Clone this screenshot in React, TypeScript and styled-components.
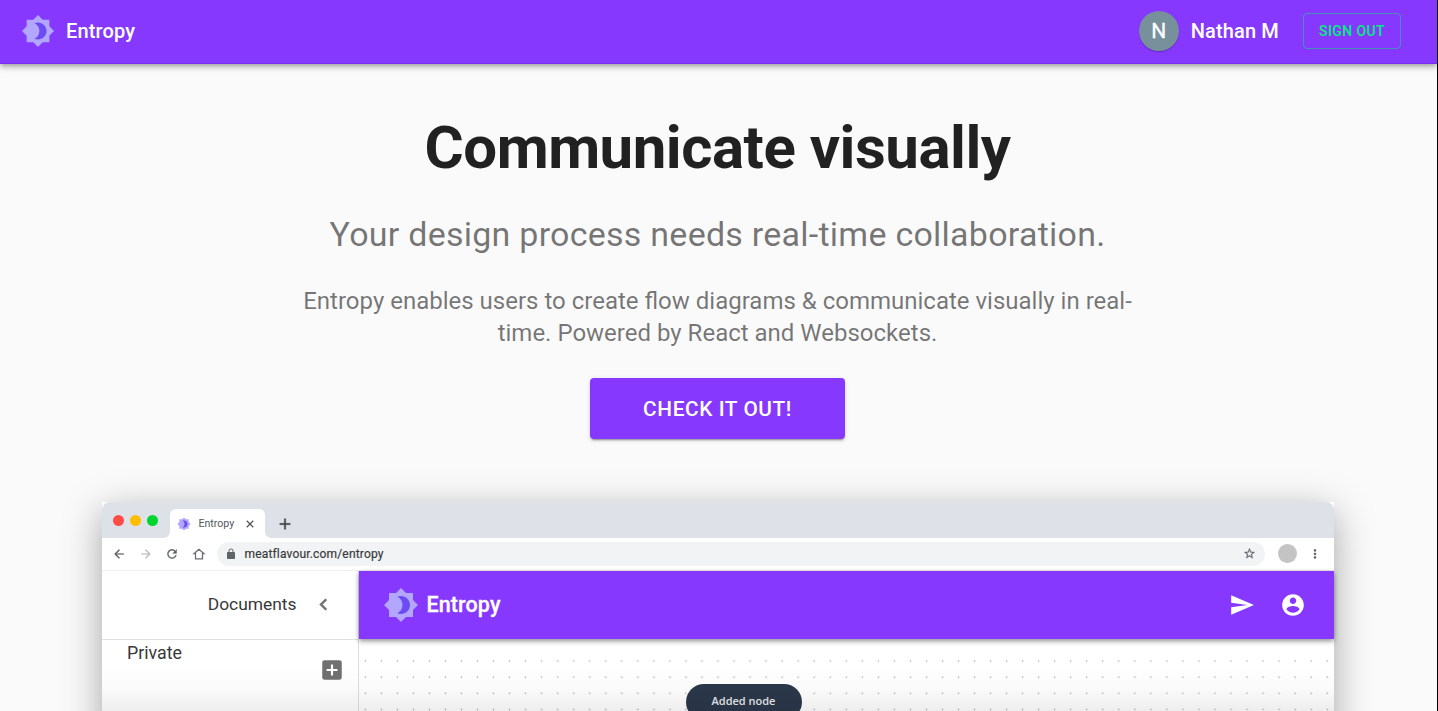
import React from "react";
import styled, { createGlobalStyle } from "styled-components";

const PURPLE = "#8638ff";

const GlobalStyle = createGlobalStyle`
  *, *::before, *::after { box-sizing: border-box; }
  html, body { margin: 0; height: 711px; overflow: hidden; }
  body {
    background: #fafafa;
    color: rgba(0, 0, 0, 0.87);
    font-family: Roboto, "Liberation Sans", sans-serif;
    -webkit-font-smoothing: antialiased;
  }
  h1, h2, p { margin: 0; }
  svg { display: block; flex: none; }
`;

const Page = styled.div`
  height: 711px;
  overflow: hidden;
  display: flex;
  flex-direction: column;
  border-right: 1px solid #000;
`;

const AppBar = styled.header`
  height: 64px;
  flex: none;
  display: flex;
  align-items: center;
  padding: 0 36px 2px 21px;
  background: ${PURPLE};
  color: #fff;
  box-shadow: inset 0 -1px 0 #762fea, 0 2px 4px -1px rgba(0, 0, 0, 0.2),
    0 4px 5px 0 rgba(0, 0, 0, 0.14), 0 1px 10px 0 rgba(0, 0, 0, 0.12);
`;

const BarTitle = styled.span<{ $gap: number }>`
  margin-left: ${(p) => p.$gap}px;
  font-size: 20px;
  font-weight: 500;
  line-height: 32px;
  letter-spacing: 0.0075em;
`;

const Avatar = styled.div`
  width: 40px;
  height: 40px;
  margin-left: auto;
  border-radius: 50%;
  background: #78909c;
  display: flex;
  align-items: center;
  justify-content: center;
  font-size: 21px;
  font-weight: 400;
  -webkit-text-stroke: 0.3px currentColor;
  box-shadow: 0 1px 1px rgba(0, 0, 0, 0.25);
`;

const SignOut = styled.button`
  width: 98px;
  height: 36px;
  margin-left: 24px;
  padding: 0;
  border: 1px solid rgba(0, 230, 118, 0.5);
  border-radius: 4px;
  background: transparent;
  color: #00f07c;
  font: 500 14px/24px Roboto, sans-serif;
  letter-spacing: 0.02857em;
`;

const Hero = styled.main`
  flex: none;
  width: 852px;
  height: 438px;
  margin: 0 0 0 291.5px;
  padding-top: 48px;
  display: flex;
  flex-direction: column;
  align-items: center;
  text-align: center;
`;

const Headline = styled.h1`
  font-size: 60px;
  font-weight: 700;
  line-height: 72px;
  letter-spacing: -0.00833em;
`;

const Tagline = styled.h2`
  margin-top: 29px;
  font-size: 34px;
  font-weight: 400;
  line-height: 42px;
  letter-spacing: 0.00735em;
  color: rgba(0, 0, 0, 0.54);
`;

const Blurb = styled.p`
  margin-top: 30px;
  font-size: 24px;
  line-height: 32px;
  color: rgba(0, 0, 0, 0.54);
`;

const Cta = styled.button`
  width: 255px;
  height: 61px;
  margin-top: 29px;
  padding: 0;
  border: 0;
  border-radius: 4px;
  background: ${PURPLE};
  color: #fff;
  font: 500 20.8px/36px Roboto, sans-serif;
  letter-spacing: 0.02857em;
  box-shadow: 0 3px 1px -2px rgba(0, 0, 0, 0.2), 0 2px 2px 0 rgba(0, 0, 0, 0.14),
    0 1px 5px 0 rgba(0, 0, 0, 0.12);
`;

const Browser = styled.section`
  position: relative;
  flex: none;
  width: 1232px;
  height: 640px;
  margin-left: 102px;
  background: #fff;
  box-shadow: 0 10px 36px rgba(0, 0, 0, 0.34);
`;

const TabStrip = styled.div`
  height: 36px;
  display: flex;
  align-items: flex-end;
  padding-left: 11px;
  border-radius: 8px 8px 0 0;
  background: #dee1e8;
`;

const Lights = styled.div`
  display: flex;
  gap: 6px;
  align-self: center;
`;

const Light = styled.i<{ $color: string }>`
  width: 11px;
  height: 11px;
  border-radius: 50%;
  background: ${(p) => p.$color};
`;

const Tab = styled.div`
  position: relative;
  width: 95px;
  height: 29px;
  margin-left: 12px;
  padding: 0 9px 0 7px;
  display: flex;
  align-items: center;
  border-radius: 6px 6px 0 0;
  background: #fff;
  font-size: 10.6px;
  color: #55585d;

  &::before, &::after {
    content: "";
    position: absolute;
    bottom: 0;
    width: 6px;
    height: 6px;
  }
  &::before {
    left: -6px;
    background: radial-gradient(circle at 0 0, transparent 5.5px, #fff 6px);
  }
  &::after {
    right: -6px;
    background: radial-gradient(circle at 100% 0, transparent 5.5px, #fff 6px);
  }
`;

const TabLabel = styled.span`
  flex: 1;
  margin-left: 7.5px;
`;

const NewTab = styled.div`
  height: 29px;
  margin-left: 11px;
  display: flex;
  align-items: center;
`;

const Toolbar = styled.div`
  height: 32.5px;
  display: flex;
  align-items: center;
  padding: 0 12px 0 10px;
  border-bottom: 1px solid #eceef0;
`;

const NavIcons = styled.div`
  display: flex;
  gap: 12.5px;
`;

const Address = styled.div`
  width: 1048px;
  height: 24px;
  margin-left: 11px;
  padding: 0 9px 0 8px;
  display: flex;
  align-items: center;
  border-radius: 12px;
  background: #f1f3f5;
  font-size: 12px;
  color: #3a3c40;
  letter-spacing: 0.014em;
`;

const Url = styled.span`
  flex: 1;
  margin-left: 8px;
  padding-top: 1px;
  -webkit-text-stroke: 0.2px currentColor;
`;

const Profile = styled.div`
  width: 19px;
  height: 19px;
  margin: 0 11px 0 13px;
  border-radius: 50%;
  background: #c4c4c4;
`;

const Workspace = styled.div`
  display: flex;
  height: 571px;
`;

const Sidebar = styled.aside`
  width: 257px;
  border-right: 1px solid #dedede;
  font-size: 17.4px;
  color: #38383a;
`;

const SidebarHead = styled.div`
  height: 69px;
  padding: 0 23.5px 1px 0;
  display: flex;
  align-items: center;
  justify-content: flex-end;
  gap: 15px;
  border-bottom: 1px solid #e0e0e0;
`;

const Section = styled.div`
  display: flex;
  justify-content: space-between;
  padding: 2.5px 13px 0 25px;
  line-height: 21px;

  svg { margin-top: 14.5px; }
`;

const PrivateLabel = styled.span`
  font-size: 17.8px;
`;

const Content = styled.div`
  flex: 1;
  display: flex;
  flex-direction: column;
`;

const InnerBar = styled.div`
  position: relative;
  flex: none;
  height: 68.5px;
  padding: 0 28px 0 24px;
  display: flex;
  align-items: center;
  background: ${PURPLE};
  color: #fff;
  box-shadow: 0 2px 5px rgba(0, 0, 0, 0.45);
`;

const InnerTitle = styled.span`
  flex: 1;
  margin-left: 7.5px;
  font-size: 21.5px;
  font-weight: 500;
  letter-spacing: 0.005em;
  -webkit-text-stroke: 0.3px currentColor;
`;

const BarActions = styled.div`
  display: flex;
  gap: 25px;
`;

const Canvas = styled.div`
  flex: 1;
  display: flex;
  justify-content: center;
  align-items: flex-start;
  padding: 45px 206px 0 0;
`;

const DotGrid = styled.div`
  position: absolute;
  left: 257px;
  right: 0;
  top: 151px;
  height: 64px;
  background-image: radial-gradient(circle, #a6a6a6 0.5px, transparent 1.1px);
  background-size: 16.04px 16.1px;
  background-position: -1.7px 0;
`;

const Toast = styled.div`
  position: relative;
  z-index: 1;
  width: 116px;
  height: 36px;
  border-radius: 18px;
  background: #2b384a;
  color: #e6e8eb;
  font: 600 11px/34px "Open Sans", sans-serif;
  text-align: center;
`;

const Fade = styled.div`
  position: absolute;
  z-index: 1;
  left: 0;
  right: 0;
  top: 164px;
  height: 46px;
  background: linear-gradient(rgba(0, 0, 0, 0), rgba(0, 0, 0, 0.02) 50%, rgba(0, 0, 0, 0.07));
`;

const Logo = ({ size }: { size: number }) => (
  <svg width={size} height={size} viewBox="0 0 24 24">
    <path
      fill="#b3a6ff"
      d="M20 8.69V4h-4.69L12 .69 8.69 4H4v4.69L.69 12 4 15.31V20h4.69L12 23.31 15.31 20H20v-4.69L23.31 12z"
    />
    <path
      fill="#6c4bf4"
      d="M12 18c-.89 0-1.74-.2-2.5-.55C11.56 16.5 13 14.42 13 12s-1.44-4.5-3.5-5.45C10.26 6.2 11.11 6 12 6c3.31 0 6 2.69 6 6s-2.69 6-6 6z"
    />
  </svg>
);

type IconProps = { d: string; size: number; color?: string; weight?: number };

const Icon = ({ d, size, color = "currentColor", weight = 0 }: IconProps) => (
  <svg width={size} height={size} viewBox="0 0 24 24" fill={color} stroke={color} strokeWidth={weight}>
    <path d={d} />
  </svg>
);

const icons = {
  back: "M20 11H7.83l5.59-5.59L12 4l-8 8 8 8 1.41-1.41L7.83 13H20v-2z",
  forward: "M12 4l-1.41 1.41L16.17 11H4v2h12.17l-5.58 5.59L12 20l8-8z",
  reload:
    "M17.65 6.35C16.2 4.9 14.21 4 12 4c-4.42 0-7.99 3.58-7.99 8s3.57 8 7.99 8c3.73 0 6.84-2.55 7.73-6h-2.08c-.82 2.33-3.04 4-5.65 4-3.31 0-6-2.69-6-6s2.69-6 6-6c1.66 0 3.14.69 4.22 1.78L13 11h7V4l-2.35 2.35z",
  home: "M12 2.5L2 11.5h2.4V21h15.2v-9.5H22zM12 5.2l5.6 5V19H6.400v-8.800z",
  lock: "M18 8h-1V6c0-2.76-2.24-5-5-5S7 3.24 7 6v2H6c-1.1 0-2 .9-2 2v10c0 1.1.9 2 2 2h12c1.1 0 2-.9 2-2V10c0-1.1-.9-2-2-2zm-2.9 0H8.9V6c0-1.71 1.39-3.1 3.1-3.1s3.1 1.39 3.1 3.1v2z",
  star: "M22 9.24l-7.19-.62L12 2 9.19 8.63 2 9.24l5.46 4.73L5.82 21 12 17.27 18.18 21l-1.63-7.03L22 9.24zM12 15.4l-3.76 2.27 1-4.28-3.32-2.88 4.38-.38L12 6.1l1.71 4.04 4.38.38-3.32 2.88 1 4.28L12 15.4z",
  more: "M12 8c1.1 0 2-.9 2-2s-.9-2-2-2-2 .9-2 2 .9 2 2 2zm0 2c-1.1 0-2 .9-2 2s.9 2 2 2 2-.9 2-2-.9-2-2-2zm0 6c-1.1 0-2 .9-2 2s.9 2 2 2 2-.9 2-2-.9-2-2-2z",
  close: "M19 6.41L17.59 5 12 10.59 6.41 5 5 6.41 10.59 12 5 17.59 6.41 19 12 13.41 17.59 19 19 17.59 13.41 12z",
  add: "M19 13h-6v6h-2v-6H5v-2h6V5h2v6h6v2z",
  chevron: "M15.41 7.41L14 6l-6 6 6 6 1.41-1.41L10.83 12z",
  addBox:
    "M19 3H5c-1.11 0-2 .9-2 2v14c0 1.1.89 2 2 2h14c1.1 0 2-.9 2-2V5c0-1.1-.9-2-2-2zm-2 10h-4v4h-2v-4H7v-2h4V7h2v4h4v2z",
  send: "M2.01 21L23 12 2.01 3 2 10l15 2-15 2z",
  account:
    "M12 2C6.48 2 2 6.48 2 12s4.48 10 10 10 10-4.48 10-10S17.52 2 12 2zm0 3c1.66 0 3 1.34 3 3s-1.34 3-3 3-3-1.34-3-3 1.34-3 3-3zm0 14.2c-2.5 0-4.71-1.28-6-3.22.03-1.99 4-3.08 6-3.08 1.99 0 5.97 1.09 6 3.08-1.29 1.94-3.5 3.22-6 3.22z",
};

const HomeIcon = () => (
  <svg width={14} height={14} viewBox="0 0 24 24" fill="none" stroke="#6b6f74" strokeWidth={2.2}>
    <path d="M12 4L3.500 11.500H6V20.500h12v-9h2.500z" />
  </svg>
);

export default function App() {
  return (
    <>
      <GlobalStyle />
      <Page>
        <AppBar>
          <Logo size={34} />
          <BarTitle $gap={11}>Entropy</BarTitle>
          <Avatar>N</Avatar>
          <BarTitle $gap={12}>Nathan M</BarTitle>
          <SignOut>SIGN OUT</SignOut>
        </AppBar>

        <Hero>
          <Headline>Communicate visually</Headline>
          <Tagline>Your design process needs real-time collaboration.</Tagline>
          <Blurb>
            Entropy enables users to create flow diagrams &amp; communicate visually in real-time.
            Powered by React and Websockets.
          </Blurb>
          <Cta>CHECK IT OUT!</Cta>
        </Hero>

        <Browser>
          <TabStrip>
            <Lights>
              <Light $color="#ff4c46" />
              <Light $color="#ffbf00" />
              <Light $color="#00d42e" />
            </Lights>
            <Tab>
              <Logo size={14} />
              <TabLabel>Entropy</TabLabel>
              <Icon d={icons.close} size={12} color="#4a4d52" weight={0.6} />
            </Tab>
            <NewTab>
              <Icon d={icons.add} size={18} color="#404348" weight={0.4} />
            </NewTab>
          </TabStrip>
          <Toolbar>
            <NavIcons>
              <Icon d={icons.back} size={14} color="#5f6368" weight={0.4} />
              <Icon d={icons.forward} size={14} color="#bcbec1" weight={0.4} />
              <Icon d={icons.reload} size={14} color="#5f6368" weight={0.4} />
              <HomeIcon />
            </NavIcons>
            <Address>
              <Icon d={icons.lock} size={12} color="#5f6368" />
              <Url>meatflavour.com/entropy</Url>
              <Icon d={icons.star} size={13} color="#5f6368" weight={0.4} />
            </Address>
            <Profile />
            <Icon d={icons.more} size={14} color="#5f6368" weight={0.4} />
          </Toolbar>
          <Workspace>
            <Sidebar>
              <SidebarHead>
                Documents
                <Icon d={icons.chevron} size={23} color="#707070" weight={0.6} />
              </SidebarHead>
              <Section>
                <PrivateLabel>Private</PrivateLabel>
                <Icon d={icons.addBox} size={26} color="#707070" />
              </Section>
            </Sidebar>
            <Content>
              <InnerBar>
                <Logo size={36} />
                <InnerTitle>Entropy</InnerTitle>
                <BarActions>
                  <Icon d={icons.send} size={26} />
                  <Icon d={icons.account} size={26} />
                </BarActions>
              </InnerBar>
              <Canvas>
                <Toast>Added node</Toast>
              </Canvas>
            </Content>
          </Workspace>
          <DotGrid />
          <Fade />
        </Browser>
      </Page>
    </>
  );
}
